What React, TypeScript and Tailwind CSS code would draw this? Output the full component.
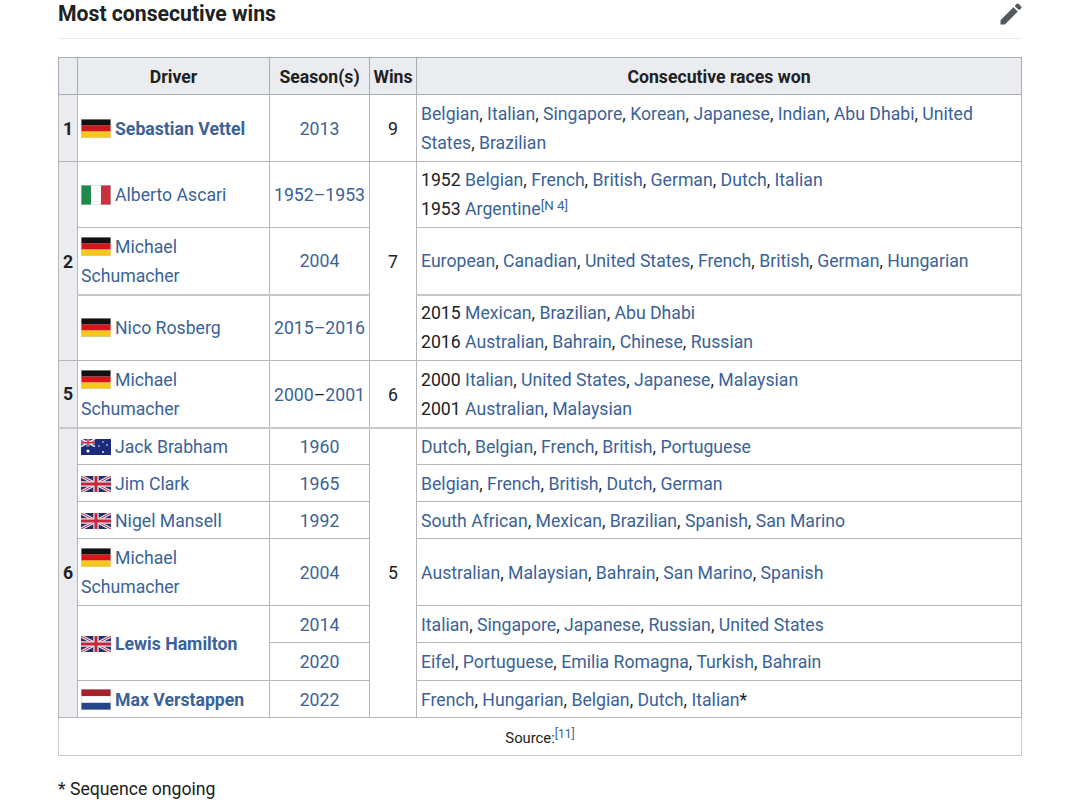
const races = (list: string) =>
  list.split(", ").map((name, i, all) => (
    <span key={name}>
      <a className="text-[#3a6298]">{name}</a>
      {i < all.length - 1 ? ", " : ""}
    </span>
  ));

function Germany() {
  return (
    <svg width="30" height="19" viewBox="0 0 30 19" className="inline-block align-[-3px] mr-[4px]">
      <rect width="30" height="19" fill="#d3d3c8" />
      <rect x="0.5" y="0.5" width="29" height="6" fill="#111" />
      <rect x="0.5" y="6.5" width="29" height="6" fill="#d8141c" />
      <rect x="0.5" y="12.5" width="29" height="6" fill="#f6c71c" />
    </svg>
  );
}

function Italy() {
  return (
    <svg width="30" height="20" viewBox="0 0 30 20" className="inline-block align-[-4px] mr-[4px]">
      <rect width="30" height="20" fill="#c9ced2" />
      <rect x="0.5" y="0.5" width="9.5" height="19" fill="#1f8a4c" />
      <rect x="10" y="0.5" width="10" height="19" fill="#fff" />
      <rect x="20" y="0.5" width="9.5" height="19" fill="#c8323c" />
    </svg>
  );
}

function Britain() {
  return (
    <svg width="30" height="16" viewBox="0 0 30 16" className="inline-block align-[-2px] mr-[4px]">
      <rect width="30" height="16" fill="#27306e" />
      <path d="M0 0L30 16M30 0L0 16" stroke="#e6e6ee" strokeWidth="3.2" />
      <path d="M0 0L30 16M30 0L0 16" stroke="#c8283c" strokeWidth="1" />
      <path d="M15 0V16M0 8H30" stroke="#e6e6ee" strokeWidth="5.4" />
      <path d="M15 0V16M0 8H30" stroke="#c8283c" strokeWidth="3" />
    </svg>
  );
}

function Australia() {
  return (
    <svg width="30" height="16" viewBox="0 0 30 16" className="inline-block align-[-2px] mr-[4px]">
      <rect width="30" height="16" fill="#1c2a7c" />
      <path d="M0 0L14 7.5M14 0L0 7.5" stroke="#e6e6ee" strokeWidth="1.8" />
      <path d="M7 0V7.5M0 3.75H14" stroke="#e6e6ee" strokeWidth="2.6" />
      <path d="M7 0V7.5M0 3.75H14" stroke="#c8283c" strokeWidth="1.4" />
      <circle cx="7" cy="12" r="1.6" fill="#fff" />
      <circle cx="22" cy="3" r="0.8" fill="#fff" />
      <circle cx="22" cy="13" r="0.9" fill="#fff" />
      <circle cx="18" cy="7" r="0.8" fill="#fff" />
      <circle cx="26" cy="6" r="0.8" fill="#fff" />
    </svg>
  );
}

function Netherlands() {
  return (
    <svg width="30" height="21" viewBox="0 0 30 21" className="inline-block align-[-4px] mr-[4px]">
      <rect width="30" height="21" fill="#c9ced2" />
      <rect x="0.5" y="0.5" width="29" height="6.7" fill="#a8202c" />
      <rect x="0.5" y="7.2" width="29" height="6.6" fill="#fff" />
      <rect x="0.5" y="13.8" width="29" height="6.7" fill="#25468c" />
    </svg>
  );
}

export default function App() {
  const cell = "border border-[#b4b6b9] pl-[3px] pr-[3px] pt-[2px] align-middle";
  const race = "border border-[#b4b6b9] pl-[4px] pr-[3px] pt-[2px] align-middle";
  const raceUp = "border border-[#b4b6b9] pl-[4px] pr-[3px] align-middle";
  const head = "border border-[#a9adb3] bg-[#eaecf0] font-bold text-center px-[3px] pt-[2px] align-middle";
  const rank = "border border-[#b4b6b9] bg-[#eaecf0] font-bold text-center pt-[2px] align-middle";
  const season = "border border-[#b4b6b9] text-center pt-[2px] align-middle text-[#3a6298]";
  const seasonLow = "border border-[#b4b6b9] border-b-2 border-b-[#c6c8cb] text-center pt-[4px] align-middle text-[#3a6298]";
  const wins = "border border-[#b4b6b9] text-center pt-[2px] align-middle";
  const winsLow = "border border-[#b4b6b9] border-b-2 border-b-[#c6c8cb] text-center pt-[4px] align-middle";
  const thick = " border-b-2 border-b-[#c6c8cb]";
  const name = "text-[#3a6298]";
  const bold = "text-[#3a6298] font-bold";

  return (
    <div className="px-[58px] bg-white text-[#202122] font-['Roboto',sans-serif] text-[17.66px] leading-[29px] h-[802px] overflow-hidden">
      <div className="flex items-center justify-between h-[39px] pt-[1px] pb-[12px] border-b border-[#eaecf0]">
        <h2 className="font-['Roboto',sans-serif] font-bold text-[21.2px] leading-[26px]">Most consecutive wins</h2>
        <svg viewBox="0 0 24 24" className="w-7 h-7 -mr-[3px] fill-[#54595d]">
          <path d="M3 17.25V21h3.75L17.81 9.94l-3.75-3.75L3 17.25zM20.71 7.04a1 1 0 0 0 0-1.41l-2.34-2.34a1 1 0 0 0-1.41 0l-1.83 1.83 3.75 3.75 1.83-1.83z" />
        </svg>
      </div>

      <table className="table-fixed border-collapse w-[964px] mt-[18px]">
        <colgroup>
          <col className="w-[19px]" />
          <col className="w-[192px]" />
          <col className="w-[100px]" />
          <col className="w-[47px]" />
          <col className="w-[605px]" />
        </colgroup>
        <tbody>
          <tr className="h-[37px]">
            <th className={head}></th>
            <th className={head}>Driver</th>
            <th className={head}>Season(s)</th>
            <th className={head}>Wins</th>
            <th className={head}>Consecutive races won</th>
          </tr>
          <tr className="h-[67px]">
            <td className={rank}>1</td>
            <td className={cell}><Germany /><a className={bold}>Sebastian Vettel</a></td>
            <td className={season}>2013</td>
            <td className={wins}>9</td>
            <td className={race}>{races("Belgian, Italian, Singapore, Korean, Japanese, Indian, Abu Dhabi, United States, Brazilian")}</td>
          </tr>
          <tr className="h-[66px]">
            <td className={rank} rowSpan={3}>2</td>
            <td className={cell}><Italy /><a className={name}>Alberto Ascari</a></td>
            <td className={season}>1952–1953</td>
            <td className={wins} rowSpan={3}>7</td>
            <td className={raceUp}>
              <div>1952 {races("Belgian, French, British, German, Dutch, Italian")}</div>
              <div>1953 {races("Argentine")}<sup className="top-0 text-[13.3px] leading-none text-[#3a6298] align-[5px]">[N 4]</sup></div>
            </td>
          </tr>
          <tr className="h-[67px]">
            <td className={cell + thick}><Germany /><a className={name}>Michael Schumacher</a></td>
            <td className={season + thick}>2004</td>
            <td className={race + thick}>{races("European, Canadian, United States, French, British, German, Hungarian")}</td>
          </tr>
          <tr className="h-[66px]">
            <td className={cell}><Germany /><a className={name}>Nico Rosberg</a></td>
            <td className={season}>2015–2016</td>
            <td className={raceUp}>
              <div>2015 {races("Mexican, Brazilian, Abu Dhabi")}</div>
              <div>2016 {races("Australian, Bahrain, Chinese, Russian")}</div>
            </td>
          </tr>
          <tr className="h-[67px]">
            <td className={rank + thick}>5</td>
            <td className={cell + thick}><Germany /><a className={name}>Michael Schumacher</a></td>
            <td className={seasonLow}>2000<span className="text-[#202122]">–</span>2001</td>
            <td className={winsLow}>6</td>
            <td className={race + thick}>
              <div>2000 {races("Italian, United States, Japanese, Malaysian")}</div>
              <div>2001 {races("Australian, Malaysian")}</div>
            </td>
          </tr>
          <tr className="h-[37px]">
            <td className={rank} rowSpan={7}>6</td>
            <td className={cell}><Australia /><a className={name}>Jack Brabham</a></td>
            <td className={season}>1960</td>
            <td className={wins} rowSpan={7}>5</td>
            <td className={race}>{races("Dutch, Belgian, French, British, Portuguese")}</td>
          </tr>
          <tr className="h-[37px]">
            <td className={cell}><Britain /><a className={name}>Jim Clark</a></td>
            <td className={season}>1965</td>
            <td className={race}>{races("Belgian, French, British, Dutch, German")}</td>
          </tr>
          <tr className="h-[37px]">
            <td className={cell}><Britain /><a className={name}>Nigel Mansell</a></td>
            <td className={season}>1992</td>
            <td className={race}>{races("South African, Mexican, Brazilian, Spanish, San Marino")}</td>
          </tr>
          <tr className="h-[67px]">
            <td className={cell}><Germany /><a className={name}>Michael Schumacher</a></td>
            <td className={season}>2004</td>
            <td className={race}>{races("Australian, Malaysian, Bahrain, San Marino, Spanish")}</td>
          </tr>
          <tr className="h-[37px]">
            <td className={cell} rowSpan={2}><Britain /><a className={bold}>Lewis Hamilton</a></td>
            <td className={season}>2014</td>
            <td className={race}>{races("Italian, Singapore, Japanese, Russian, United States")}</td>
          </tr>
          <tr className="h-[38px]">
            <td className={season}>2020</td>
            <td className={race}>{races("Eifel, Portuguese, Emilia Romagna, Turkish, Bahrain")}</td>
          </tr>
          <tr className="h-[37px]">
            <td className={cell}><Netherlands /><a className={bold}>Max Verstappen</a></td>
            <td className={season}>2022</td>
            <td className={race}>{races("French, Hungarian, Belgian, Dutch, Italian")}*</td>
          </tr>
          <tr className="h-[38px]">
            <td className="border border-[#c8cacd] text-center text-[14.8px] pt-[4px] align-middle" colSpan={5}>
              Source:<sup className="top-0 text-[12px] leading-none text-[#3a6298] align-[5px]">[11]</sup>
            </td>
          </tr>
        </tbody>
      </table>

      <p className="mt-[18px] pt-[1px] leading-[29px]">* Sequence ongoing</p>
    </div>
  );
}
